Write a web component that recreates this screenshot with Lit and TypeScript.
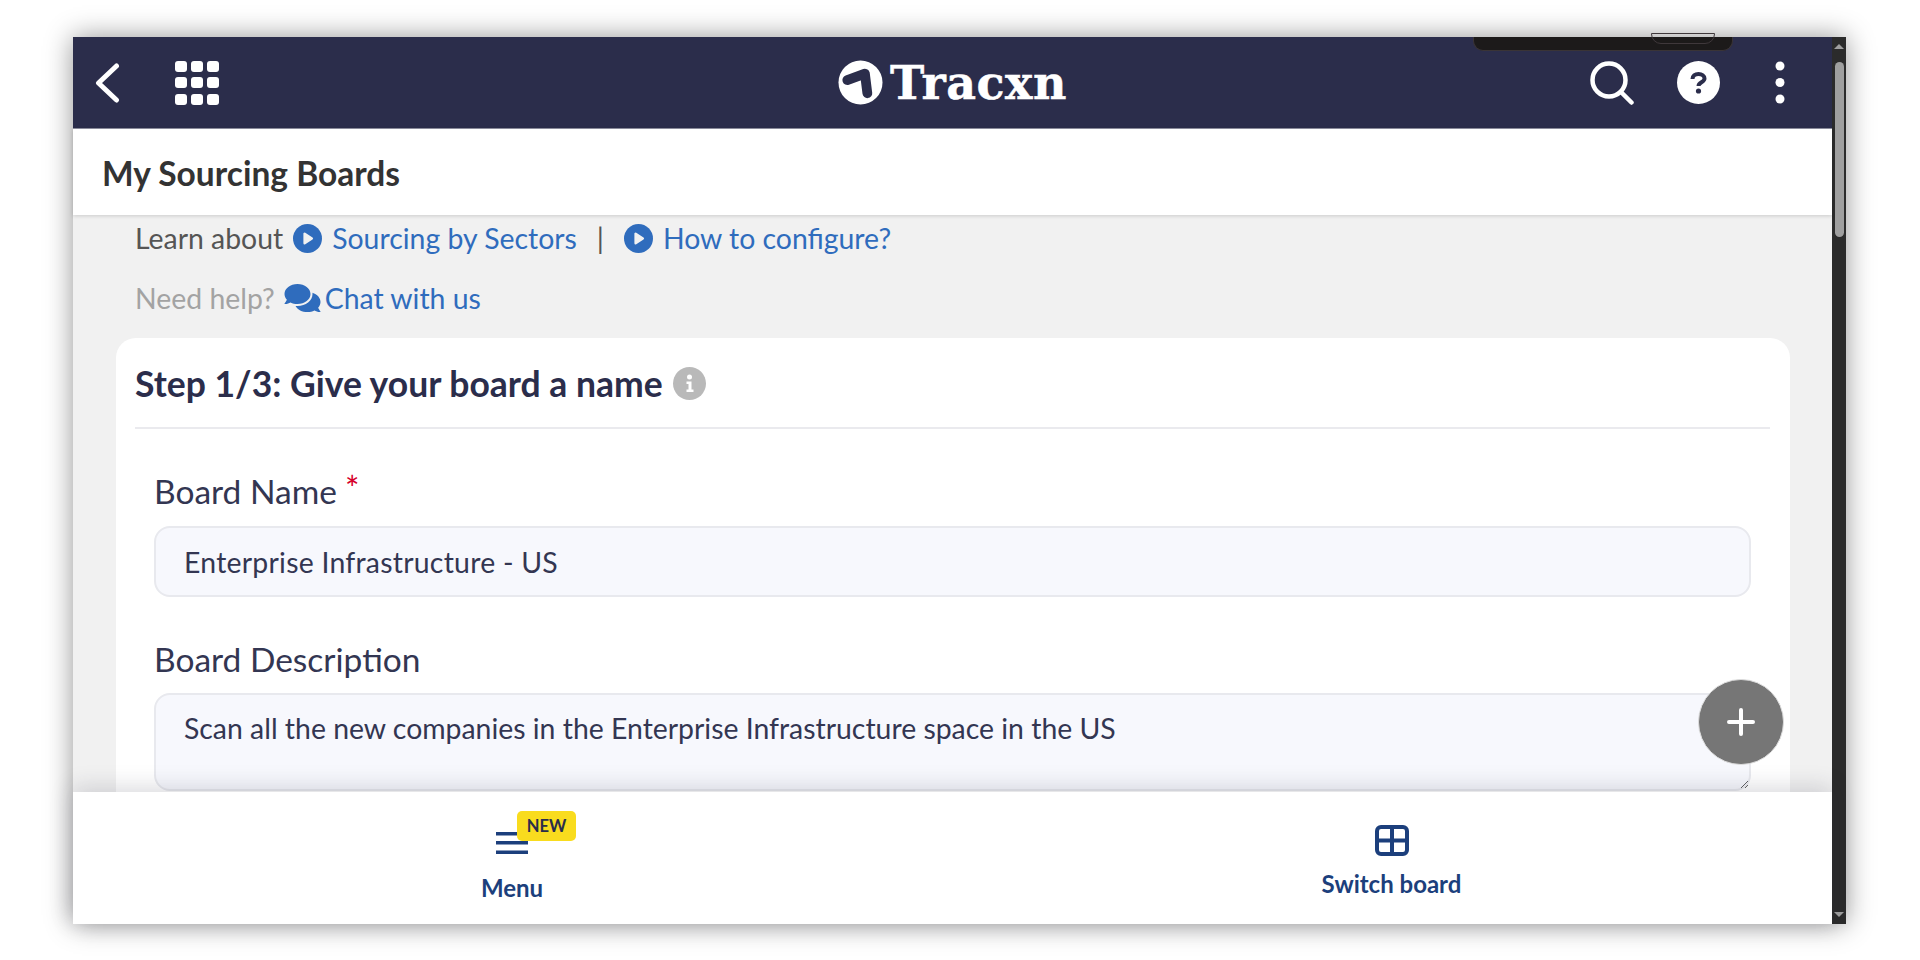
import { LitElement, html, css, svg } from "lit";
import { customElement } from "lit/decorators.js";

const playIcon = html`<svg class="play" viewBox="0 0 30 30"><circle cx="15" cy="15" r="15" fill="#2f6cbd"/><path d="M12 10v10l7.500-5z" fill="#f1f1f1" stroke="#f1f1f1" stroke-width="2.500" stroke-linejoin="round"/></svg>`;

@customElement("app-root")
export class AppRoot extends LitElement {
  static styles = css`
    :host {
      display: block;
      width: 1920px;
      height: 960px;
      box-sizing: border-box;
      padding: 37px 74px 36px 73px;
      background: #fff;
      overflow: hidden;
      font-family: Lato, "Open Sans", sans-serif;
    }
    .window {
      display: flex;
      height: 887px;
      box-shadow: 0 0 26px rgba(0, 0, 0, 0.42);
    }
    .main {
      flex: 1;
      min-width: 0;
      display: flex;
      flex-direction: column;
      position: relative;
      background: #f1f1f1;
    }
    .scrollbar {
      width: 14px;
      background: #2b2b2b;
      display: flex;
      flex-direction: column;
      align-items: center;
    }
    .arrow-up,
    .arrow-down {
      width: 0;
      height: 0;
      border-left: 5px solid transparent;
      border-right: 5px solid transparent;
    }
    .arrow-up {
      margin-top: 7px;
      border-bottom: 5px solid #9f9f9f;
    }
    .arrow-down {
      margin-top: auto;
      margin-bottom: 7px;
      border-top: 5px solid #9f9f9f;
    }
    .thumb {
      margin-top: 13px;
      width: 9px;
      height: 175px;
      border-radius: 5px;
      background: #9f9f9f;
    }
    .topbar {
      height: 92px;
      flex: none;
      box-sizing: border-box;
      background: #2b2d4b;
      border-bottom: 1px solid #8f90a0;
      display: grid;
      grid-template-columns: 1fr auto 1fr;
      align-items: center;
      position: relative;
      color: #fff;
    }
    .top-left {
      display: flex;
      align-items: center;
      gap: 54px;
      padding-left: 22px;
    }
    .top-right {
      display: flex;
      align-items: center;
      justify-content: flex-end;
      gap: 45px;
      padding-right: 47px;
    }
    .search {
      margin-right: -2px;
    }
    .kebab {
      margin-left: 10px;
    }
    .logo {
      display: flex;
      align-items: center;
      gap: 7px;
      font-family: "DejaVu Serif", serif;
      font-weight: 700;
      font-size: 46px;
      line-height: 1;
      letter-spacing: 0.5px;
      -webkit-text-stroke: 0.5px #fff;
    }
    .notch {
      position: absolute;
      left: 1400px;
      top: 0;
      width: 260px;
      height: 14px;
      background: #1c1a1a;
      border-radius: 0 0 10px 10px;
      border: 1px solid #3a3436;
      border-top: none;
      box-sizing: border-box;
    }
    .notch i {
      position: absolute;
      left: 177px;
      top: -4px;
      width: 64px;
      height: 11px;
      box-sizing: border-box;
      border: 1px solid #3f383b;
      border-radius: 0 0 10px 10px;
    }
    .titlebar {
      height: 86px;
      flex: none;
      box-sizing: border-box;
      background: #fff;
      padding: 2px 0 0 29px;
      display: flex;
      align-items: center;
      font-size: 33.5px;
      font-weight: 700;
      color: #333;
      box-shadow: 0 1px 4px rgba(0, 0, 0, 0.16);
      position: relative;
      z-index: 1;
    }
    .content {
      flex: 1;
      min-height: 0;
      overflow: hidden;
    }
    .links {
      padding: 5px 0 0 62px;
      font-size: 28.4px;
      line-height: 36px;
      color: #555;
      display: flex;
      align-items: center;
      gap: 10px;
    }
    .links + .links {
      padding-top: 24px;
      color: #a3a3a3;
      gap: 9px;
    }
    .links a {
      color: #2f6cbd;
      display: flex;
      align-items: center;
      gap: 10px;
    }
    .links + .links a {
      gap: 4px;
    }
    .sep {
      margin: 0 10px;
      color: #555;
    }
    .play {
      width: 29px;
      height: 29px;
    }
    .chat {
      width: 37px;
      height: 32px;
    }
    .card {
      margin: 22px 42px 0 43px;
      padding: 0 20px 40px 19px;
      background: #fff;
      border-radius: 20px;
    }
    .card-head {
      height: 91px;
      box-sizing: border-box;
      padding-top: 2px;
      border-bottom: 2px solid #eaeaee;
      display: flex;
      align-items: center;
      gap: 10px;
      font-size: 35.5px;
      font-weight: 700;
      color: #2b2d4b;
    }
    .info {
      width: 33px;
      height: 33px;
    }
    .field {
      padding: 0 19px;
    }
    .field label {
      display: block;
      font-size: 33.5px;
      line-height: 40px;
      color: #333652;
    }
    .name {
      padding-top: 42px;
    }
    .desc {
      padding-top: 42px;
    }
    .req {
      color: #d6002a;
      font-size: 34px;
      line-height: 0;
      position: relative;
      top: -3px;
      margin-left: 8px;
    }
    input,
    textarea {
      display: block;
      width: 100%;
      box-sizing: border-box;
      padding: 0 28px;
      background: #f7f8fd;
      border: 2px solid #e8e9ee;
      border-radius: 16px;
      font: 28.4px/36px Lato, sans-serif;
      color: #333652;
      outline: none;
    }
    input {
      height: 71px;
      margin-top: 15px;
      letter-spacing: 0.25px;
    }
    textarea {
      height: 98px;
      margin-top: 14px;
      padding-top: 15px;
      resize: vertical;
    }
    .fab {
      position: absolute;
      left: 1625px;
      top: 642px;
      width: 86px;
      height: 86px;
      border-radius: 50%;
      background: #767676;
      border: 1px solid #ddd;
      box-sizing: border-box;
      display: flex;
      align-items: center;
      justify-content: center;
      z-index: 3;
    }
    .bottom {
      height: 132px;
      flex: none;
      background: #fff;
      display: grid;
      grid-template-columns: 878px 1fr;
      box-shadow: 0 -4px 22px rgba(40, 40, 60, 0.18);
      position: relative;
      z-index: 2;
      color: #1c3f7c;
      font-size: 24px;
      font-weight: 700;
    }
    .tab {
      display: flex;
      flex-direction: column;
      align-items: center;
      padding-top: 33px;
      gap: 14px;
      line-height: 28px;
    }
    .tab.menu {
      padding-top: 39px;
      gap: 21px;
    }
    .menu-icon {
      position: relative;
      width: 32px;
      height: 22px;
    }
    .badge {
      position: absolute;
      left: 21px;
      top: -20px;
      width: 59px;
      height: 30px;
      background: #f9dc1e;
      border-radius: 5px;
      display: flex;
      align-items: center;
      justify-content: center;
      font-size: 16.5px;
      line-height: 1;
      color: #2b2d4b;
    }
  `;

  render() {
    return html`
      <div class="window">
        <div class="main">
          <header class="topbar">
            <div class="top-left">
              <svg width="26" height="40" viewBox="0 0 26 40"><path d="M21.500 3 3.500 20l18 17" fill="none" stroke="#fff" stroke-width="5" stroke-linecap="round" stroke-linejoin="round"/></svg>
              <svg width="44" height="44" viewBox="0 0 44 44" fill="#fff">
                ${[0, 16, 33].map((y) =>
                  [0, 16, 32].map((x) => svg`<rect x=${x} y=${y} width="12" height="11" rx="3"/>`)
                )}
              </svg>
            </div>
            <div class="logo">
              <svg width="45" height="45" viewBox="0 0 46 46">
                <circle cx="23" cy="23" r="22.5" fill="#fff"/>
                <path d="M9.500 20.500 27.500 14 30 34" fill="none" stroke="#2b2d4b" stroke-width="10" stroke-linecap="round" stroke-linejoin="round"/>
              </svg>
              <span>Tracxn</span>
            </div>
            <div class="top-right">
              <svg class="search" width="44" height="44" viewBox="0 0 44 44"><circle cx="19" cy="19" r="16.500" fill="none" stroke="#fff" stroke-width="4.500"/><path d="M31 31l10.500 10.500" stroke="#fff" stroke-width="4.500" stroke-linecap="round"/></svg>
              <svg width="43" height="43" viewBox="0 0 43 43"><circle cx="21.500" cy="21.500" r="21.500" fill="#fff"/><path d="M15.500 18c0-3 2.500-5 6-5s6 2 6 4.500c0 3.800-6 3.700-6 7.500" fill="none" stroke="#2b2d4b" stroke-width="4"/><circle cx="21.500" cy="30" r="2.600" fill="#2b2d4b"/></svg>
              <svg class="kebab" width="10" height="43" viewBox="0 0 10 43" fill="#fff"><circle cx="5" cy="5" r="4.500"/><circle cx="5" cy="21.500" r="4.500"/><circle cx="5" cy="38" r="4.500"/></svg>
            </div>
            <div class="notch"><i></i></div>
          </header>
          <div class="titlebar">My Sourcing Boards</div>
          <div class="content">
            <div class="links">
              <span>Learn about</span>
              <a>${playIcon}<span>Sourcing by Sectors</span></a>
              <span class="sep">|</span>
              <a>${playIcon}<span>How to configure?</span></a>
            </div>
            <div class="links">
              <span>Need help?</span>
              <a>
                <svg class="chat" viewBox="0 0 576 512" fill="#2f6cbd"><path d="M416 192c0-88.400-93.100-160-208-160S0 103.600 0 192c0 34.300 14.100 65.900 38 92-13.400 30.200-35.500 54.200-35.800 54.500-2.200 2.300-2.800 5.700-1.500 8.700S4.800 352 8 352c36.600 0 66.900-12.300 88.700-25 32.200 15.700 70.300 25 111.300 25 114.900 0 208-71.600 208-160zm122 220c23.900-26 38-57.700 38-92 0-66.900-53.500-124.200-129.300-148.100.9 6.600 1.300 13.300 1.300 20.100 0 105.900-107.700 192-240 192-10.800 0-21.300-.8-31.700-1.900C207.800 439.600 281.800 480 368 480c41 0 79.100-9.200 111.300-25 21.800 12.700 52.100 25 88.700 25 3.200 0 6.100-1.900 7.300-4.800 1.300-2.900.7-6.300-1.500-8.700-.3-.3-22.400-24.200-35.800-54.500z"/></svg>
                <span>Chat with us</span>
              </a>
            </div>
            <section class="card">
              <div class="card-head">
                <span>Step 1/3: Give your board a name</span>
                <svg class="info" viewBox="0 0 33 33"><circle cx="16.500" cy="16.500" r="16.500" fill="#b9b9b9"/><circle cx="16.500" cy="10" r="2.500" fill="#fff"/><path d="M13.500 14.500h5v8h2v2.500h-7v-2.500h2v-5.500h-2z" fill="#fff"/></svg>
              </div>
              <div class="field name">
                <label>Board Name<span class="req">*</span></label>
                <input type="text" value="Enterprise Infrastructure - US" />
              </div>
              <div class="field desc">
                <label>Board Description</label>
                <textarea>Scan all the new companies in the Enterprise Infrastructure space in the US</textarea>
              </div>
            </section>
          </div>
          <div class="fab">
            <svg width="28" height="28" viewBox="0 0 28 28"><path d="M14 2v24M2 14h24" stroke="#fff" stroke-width="4" stroke-linecap="round"/></svg>
          </div>
          <nav class="bottom">
            <div class="tab menu">
              <div class="menu-icon">
                <svg width="32" height="22" viewBox="0 0 32 22" fill="#1c3f7c"><rect y="0" width="32" height="3.500"/><rect y="9" width="32" height="3.500"/><rect y="18.500" width="32" height="3.500"/></svg>
                <span class="badge">NEW</span>
              </div>
              <span>Menu</span>
            </div>
            <div class="tab">
              <svg width="34" height="31" viewBox="0 0 34 31"><rect x="2" y="2" width="30" height="27" rx="4" fill="none" stroke="#1c3f7c" stroke-width="4"/><path d="M17 2v27M2 15.500h30" stroke="#1c3f7c" stroke-width="4"/></svg>
              <span>Switch board</span>
            </div>
          </nav>
        </div>
        <div class="scrollbar">
          <div class="arrow-up"></div>
          <div class="thumb"></div>
          <div class="arrow-down"></div>
        </div>
      </div>
    `;
  }
}
